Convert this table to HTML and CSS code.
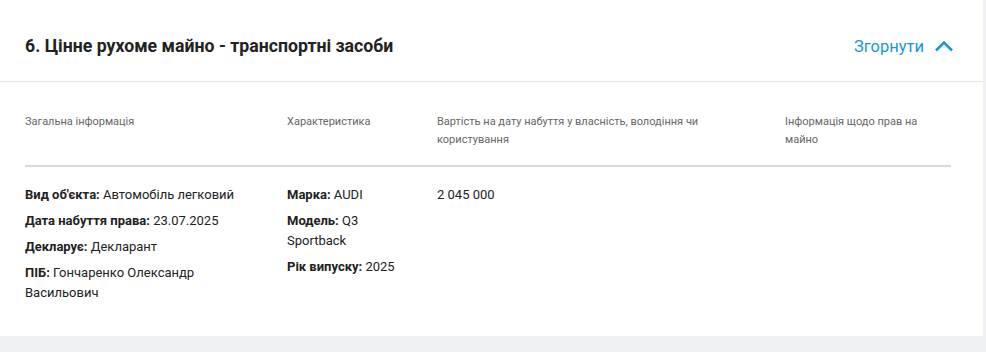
FILE: index.html
```html
<!DOCTYPE html>
<html lang="uk">
<head>
    <meta name="viewport" content="width=device-width, initial-scale=1">
    <title>Цінне рухоме майно - транспортні засоби</title>
    <link rel="stylesheet" href="styles.css">
</head>
<body>

    <div class="section">
        <div class="section-head">
            <h2 class="section-title">6. Цінне рухоме майно - транспортні засоби</h2>
            <button class="toggle-btn">
                Згорнути
                <svg class="chevron" width="20" height="12" viewBox="0 0 20 12">
                    <path d="M2 10.5 L10 2.5 L18 10.5" fill="none" stroke="currentColor" stroke-width="2.6"/>
                </svg>
            </button>
        </div>

        <!-- Property table -->
        <div class="prop-table">
            <div class="prop-row head-row">
                <div class="cell">Загальна інформація</div>
                <div class="cell">Характеристика</div>
                <div class="cell">Вартість на дату набуття у власність, володіння чи користування</div>
                <div class="cell">Інформація щодо прав на майно</div>
            </div>
            <div class="prop-row body-row">
                <div class="cell">
                    <p><b>Вид об'єкта:</b> Автомобіль легковий</p>
                    <p><b>Дата набуття права:</b> 23.07.2025</p>
                    <p><b>Декларує:</b> Декларант</p>
                    <p><b>ПІБ:</b> Гончаренко Олександр Васильович</p>
                </div>
                <div class="cell">
                    <p><b>Марка:</b> AUDI</p>
                    <p><b>Модель:</b> Q3 Sportback</p>
                    <p><b>Рік випуску:</b> 2025</p>
                </div>
                <div class="cell">
                    <p>2 045 000</p>
                </div>
                <div class="cell"></div>
            </div>
        </div>
    </div>

</body>
</html>
```

FILE: styles.css
```css
/* General Styles */
body {
    font-family: Roboto, "Liberation Sans", sans-serif;
    margin: 0;
    padding: 0;
    background-color: #eff0f4;
    color: #222;
}

/* Section card */
.section {
    width: 983px;
    background: white;
    padding-bottom: 33px;
}

.section-head {
    display: flex;
    justify-content: space-between;
    align-items: center;
    padding: 34px 29px 22px 25px;
    border-bottom: 1px solid #e6e6e6;
}

.section-title {
    margin: 0;
    font-size: 17.7px;
    line-height: 25px;
    font-weight: bold;
    color: #222;
}

.toggle-btn {
    display: flex;
    align-items: center;
    gap: 10px;
    background: none;
    border: none;
    padding: 0;
    font-family: inherit;
    font-size: 16.5px;
    color: #1a97d4;
    cursor: pointer;
}

.chevron { margin-top: -2px; }

/* Table */
.prop-table {
    width: 926px;
    margin-left: 25px;
}

.prop-row {
    display: grid;
    grid-template-columns: 262px 150px 348px 1fr;
}

.cell { padding-right: 22px; }

.head-row {
    padding: 31px 0 16px;
    border-bottom: 2px solid #d9d9d9;
    font-size: 11px;
    line-height: 18px;
    color: #666;
}

.body-row {
    padding-top: 18px;
    font-size: 13px;
    line-height: 20px;
}

.body-row p { margin: 0 0 6px; }
.body-row p:last-child { margin-bottom: 0; }
```
